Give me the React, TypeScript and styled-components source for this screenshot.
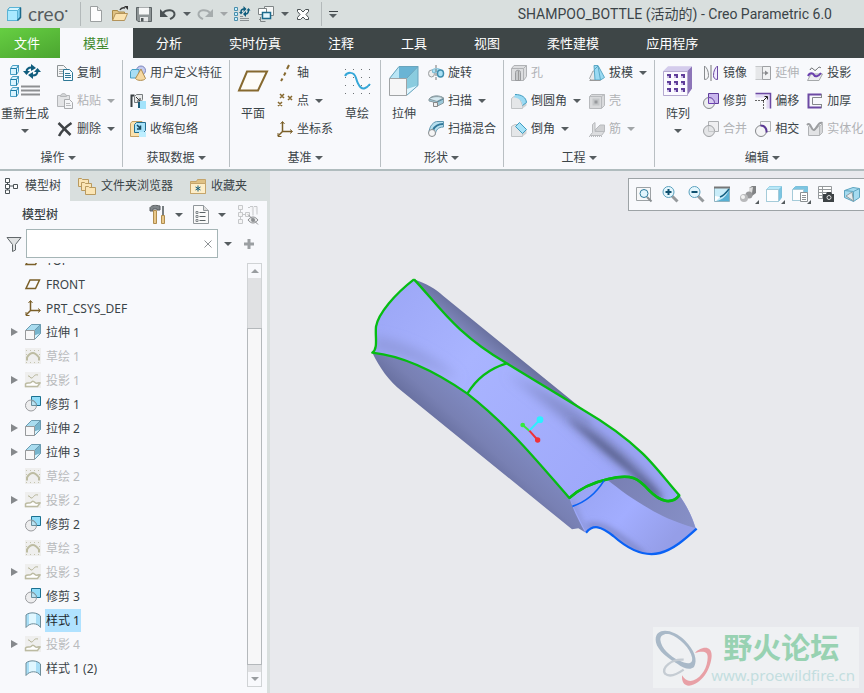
import React from 'react';
import styled, { createGlobalStyle, css } from 'styled-components';

const c = {
  chrome: '#d9dfde',
  dark: '#3e4647',
  panel: '#f8f9fc',
  line: '#b0bcbe',
  text: '#3b4448',
  off: '#b0b2b5',
  view: '#e8e9ed',
};

const Global = createGlobalStyle`
  * { box-sizing: border-box; }
  html, body, #root { height: 100%; }
  body { margin: 0; overflow: hidden; font: 12px/16px "Noto Sans", "Noto Sans CJK SC", sans-serif; color: ${c.text}; }
  button, input { font: inherit; color: inherit; }
`;

/* ---------- icons ---------- */

const art: Record<string, React.ReactNode> = {
  logo: (
    <g stroke="#1b6a8c" strokeLinejoin="round">
      <path d="M1.5 4.5 3.5 1.5h11v9.500l-3 3.500h-10z" fill="#7fd0f0" />
      <path d="M1.500 4.500h10v10h-10z" fill="#a9e9ff" stroke="#5ab4d6" />
      <path d="M1.500 4.500 3.500 1.500h11l-3 3z" fill="#d6f5ff" stroke="#5ab4d6" />
      <path d="M14.500 1.500v10l-3 3" fill="none" strokeWidth="1.500" />
    </g>
  ),
  newFile: (
    <>
      <path d="M2.500.5h7l4 4v11h-11z" fill="#fdfdfd" stroke="#9b9fa0" />
      <path d="M9.500.5v4h4" fill="#e6e8e8" stroke="#9b9fa0" />
    </>
  ),
  open: (
    <>
      <path d="M.5 14.500v-10h5l1 1.500h6v2" fill="#dfc284" stroke="#a98a4a" />
      <path d="M3.500 7.500h12l-3 7h-12z" fill="#fbe3b0" stroke="#b3935a" />
      <path d="M8 4c1-2 3-2.500 5-2" fill="none" stroke="#333" strokeWidth="1.500" />
      <path d="M12 0h4v4z" fill="#333" />
    </>
  ),
  save: (
    <>
      <path d="M.5 1.500h15v14H2l-1.500-1.500z" fill="#8e9596" stroke="#5d6466" />
      <path d="M3 1.500h10v7H3z" fill="#f6f7f7" />
      <path d="M4 11h8v4.500H4z" fill="#e5e7e7" />
      <path d="M5 12h2.500v3.500H5z" fill="#4d5456" />
    </>
  ),
  undo: (
    <>
      <path d="M3 7c3-4 12-4 11.500 1.500C14.300 11.500 12 12 10 13" fill="none" stroke="#4a5153" strokeWidth="2" />
      <path d="M0 3v8h8z" fill="#4a5153" />
    </>
  ),
  redo: (
    <>
      <path d="M13 7C10 3 1 3 1.500 8.500 1.700 11.500 4 12 6 13" fill="none" stroke="#a6acad" strokeWidth="2" />
      <path d="M16 3v8H8z" fill="#a6acad" />
    </>
  ),
  regenSmall: (
    <>
      <g fill="#c9efff" stroke="#4a8fac"><path d="M.5 1.500h3v3h-3zM.5 6.500h3v3h-3zM.5 11.500h3v3h-3z" /></g>
      <path d="M6 12.500h9M6 14.500h9M6 10.500h3" stroke="#8a9092" />
      <path d="M7 6c0-2 1-3 3-3M14.500 4c0 3-1 4-3 4" fill="none" stroke="#0f5c7d" strokeWidth="1.500" />
      <path d="M9.500 0l3 3-3 3zM12 5v6L9 8zM5 6h4l-2 2.500zM12.500 4.500h4L14.500 2z" fill="#0f5c7d" />
    </>
  ),
  windows: (
    <>
      <path d="M6.500.5h9v9h-9z" fill="#f5f6f6" stroke="#7f8586" />
      <path d="M.5 2.500h8v6h-8z" fill="#fff" stroke="#7f8586" />
      <path d="M4.500 6.500h8v6h-8z" fill="#e2f5fc" stroke="#1b6a8c" strokeWidth="1.500" />
      <path d="M1 13.500h2M2.500 11v4.500h5" fill="none" stroke="#7f8586" />
    </>
  ),
  closeWin: (
    <path d="M2.500 3.500h3L8 6l2.500-2.500h3v2L11 8.500l2.500 3v2h-3L8 11l-2.500 2.500h-3v-2L5 8.500l-2.500-3z" fill="#fff" stroke="#4a5153" />
  ),
  regen: (
    <>
      <g stroke="#4a9fc4" fill="#d9f4ff">
        <path d="M1.500 4.500l2-3h6v6l-2 3h-6zM1.500 15.500l2-3h6v6l-2 3h-6zM1.500 26.500l2-3h6v6l-2 3h-6z" />
        <path d="M1.500 4.500h6v6M7.500 4.500l2-3M1.500 15.500h6v6M7.500 15.500l2-3M1.500 26.500h6v6M7.500 26.500l2-3" fill="none" stroke="#1b7ba5" />
      </g>
      <path d="M12 22.500h19M12 26.500h19M12 30.500h19" stroke="#8d8f92" strokeWidth="2" />
      <path d="M17.500 8c0-3 2-4.500 5-4.500M28.500 7c0 3-2 4.500-5 4.500" fill="none" stroke="#0f5c7d" strokeWidth="2" />
      <path d="M22 0l5 4-5 3zM24 8v7l-5-4zM14 7h7l-3.500 4zM25 8h7l-3.500-4z" fill="#0f5c7d" />
    </>
  ),
  copy: (
    <>
      <path d="M.5.5h6l3 3v8h-9z" fill="#f4f5f6" stroke="#8d9294" />
      <path d="M2 4.500h5M2 6.500h5M2 8.500h5" stroke="#a5aaac" />
      <path d="M6.500 4.500h6l3 3v8h-9z" fill="#f4fbff" stroke="#2e7896" />
      <path d="M8 8.500h5M8 10.500h6M8 12.500h6" stroke="#2e7896" />
    </>
  ),
  paste: (
    <>
      <path d="M.5 2.500h12v11H.5z" fill="#e3e4e6" stroke="#b4b6b9" />
      <path d="M3.500 3.500c0-4 6-4 6 0z" fill="#d2d4d6" stroke="#b4b6b9" />
      <path d="M7.500 6.500h5l3 3v6h-8z" fill="#f5f6f8" stroke="#a9abae" />
      <path d="M9 10.500h4M9 12.500h5" stroke="#b9bbbe" />
    </>
  ),
  remove: <path d="M1.500 2 13.500 14M14.500 2C10 5 5 9 2 15" fill="none" stroke="#3f4346" strokeWidth="2.500" />,
  udf: (
    <>
      <circle cx="11" cy="5.500" r="4.500" fill="#c4cbee" stroke="#7b84bd" />
      <path d="M.5 6.500 2 4.500h7v7L8 13H.5z" fill="#a8def5" stroke="#4a9fc4" />
      <path d="M11 4 5.500 13.500c1.500 2.500 8.500 2.500 10 0z" fill="#f6d9a2" stroke="#b08d4e" />
    </>
  ),
  copyGeom: (
    <>
      <path d="M1.500 14V2.500h3" fill="none" stroke="#394043" strokeWidth="2" />
      <path d="M4.500 3.500l2-2h6v5l-2 3h-6z" fill="#e9ebec" stroke="#777c7e" />
      <path d="M6 4l4 4M10 5v3H7" stroke="#333" fill="none" />
      <path d="M8 9h3v6H8z" fill="#1b5d7a" /><path d="M10 8h6v8h-6z" fill="#a3e3fb" />
    </>
  ),
  shrink: (
    <>
      <path d="M.5 2.500 2 .5h10v12L10 15.500H.5z" fill="#fbe2ae" stroke="#c3a063" />
      <path d="M4.500 3.500l2-2h9v8l-2 2h-9z" fill="#a8e3fa" stroke="#236d8e" />
      <path d="M7 4l3 3M10.500 4.500V8H7" stroke="#17495e" strokeWidth="1.500" fill="none" />
      <path d="M9 11h7v5H9z" fill="#bdeeff" />
    </>
  ),
  plane: <path d="M10 1.500h20L21 20.500H2z" fill="#fdfcf8" stroke="#86692f" strokeWidth="2" />,
  axis: <path d="M12 0 10 4M8.500 7.500l-1.500 3M5.500 13.500 4 16" stroke="#86692f" strokeWidth="2" />,
  points: <path d="M3 1l4 4M7 1 3 5M11 3l4 4M15 3l-4 4M1 9l4 4M5 9l-4 4" stroke="#86692f" strokeWidth="1.500" />,
  csys: (
    <>
      <path d="M5.500 1v9.500H15M5.500 10.500 1 15" fill="none" stroke="#7a5f28" strokeWidth="1.500" />
      <path d="M3.500 3l2-2.500 2 2.500M13 8.500l2.500 2-2.500 2M1 12v3.500h3.500" fill="none" stroke="#7a5f28" />
    </>
  ),
  sketch: (
    <>
      <g fill="#6d7275">
        {[0, 8, 16, 24].map((y) => [0, 8, 16, 24].map((x) => <rect key={`${x}-${y}`} x={x + 2} y={y + 1} width="1" height="1" />))}
      </g>
      <path d="M2 8C4 4 11 3 13 10S19 26 27 16" fill="none" stroke="#35a7d8" strokeWidth="2" />
    </>
  ),
  extrudeBig: (
    <>
      <path d="M11 1.500h19v19L18.500 30.500H1.500v-17z" fill="#8fc8df" />
      <path d="M11 1.500 1.500 13.500h17L30 1.500z" fill="#b9e5f5" /><path d="M11 1.500v12h7.500L30 1.500z" fill="#6ab4d4" />
      <path d="M30 1.500 18.500 13.500v17L30 20.500z" fill="#8accdf" /><path d="M18.500 30.500V24l11.500-3.500z" fill="#dff6ff" />
      <path d="M11 1.500h19v19L18.500 30.500M30 1.500 18.500 13.500M11 1.500 1.500 13.500" fill="none" stroke="#6aa5bd" />
      <path d="M1.500 13.500h17v17h-17z" fill="#f6f6f7" stroke="#a0a3a5" />
    </>
  ),
  extrude: (
    <>
      <path d="M6.500.5h9v9l-6 6h-9v-9z" fill="#7dbdd8" />
      <path d="M6.500.5 1 6h8.500l6-5.500z" fill="#a9dcef" /><path d="M15.500.5l-6 6v9l6-6z" fill="#77b5cd" />
      <path d="M9.500 15.500v-4l5-2z" fill="#ddf6ff" />
      <path d="M6.500.5h9v9l-6 6M15.500.5l-6 6M6.500.5l-6 6" fill="none" stroke="#6b9bb0" />
      <path d="M.5 6.500h9v9h-9z" fill="#f7f7f8" stroke="#96999b" />
    </>
  ),
  revolve: (
    <>
      <ellipse cx="3.500" cy="8.500" rx="3" ry="3.500" fill="#eee" stroke="#999ea0" />
      <path d="M4 5c3-2 6-2 9 0l-1 3c-2-1-5-1-7 0z" fill="#a9e0f5" stroke="#7bb9d0" />
      <ellipse cx="12.500" cy="8.500" rx="3" ry="3.500" fill="#a9e0f5" stroke="#3f8eae" strokeWidth="1.500" />
      <path d="M8 0v16" stroke="#777" strokeDasharray="3 1" />
    </>
  ),
  sweep: (
    <>
      <path d="M1 6C4 2 12 2 15.500 5v5l-6 3-4-1V9L1 8z" fill="#9bc8d9" stroke="#8b9ba1" />
      <path d="M1 6c3-3 11-3 14.500-1L9 8.500z" fill="#d5e9f0" stroke="#8b9ba1" /><path d="M9 9l6.500-3" stroke="#56869b" />
      <path d="M5.500 9.500h4v4h-4z" fill="#efefef" stroke="#888" />
    </>
  ),
  sweepBlend: (
    <>
      <path d="M1 12C1 5 6 0 10 .5h5.500V6C10 6 8 9 7 14z" fill="#b7dfee" stroke="#5f97b0" />
      <path d="M5 9C7 5 10 3 15 3" fill="none" stroke="#31789a" strokeWidth="2" />
      <circle cx="4" cy="12" r="3.500" fill="#f5f5f5" stroke="#8a8d8f" />
    </>
  ),
  hole: (
    <g fill="#dcdddf" stroke="#b0b2b5">
      <path d="M.5 3.500 3 .5h12.500v11l-3 4H.5z" /><path d="M12.500 3.500l3-3M.5 3.500h12v12" />
      <path d="M4.500 15.500v-8c0-3 5-3 5 0v8z" fill="#c6c8ca" stroke="#999b9e" /><path d="M7.500 6v9.500" stroke="#999" />
    </g>
  ),
  round: (
    <>
      <path d="M.5 5.500 3 3.500h5l3.500 9V15.500H.5z" fill="#e4e6e8" stroke="#c0c3c5" />
      <path d="M11.500 12.500l4-3v3l-4 3z" fill="#cfd2d4" />
      <path d="M4 1.500c7 0 11 3 11.500 8l-4 3C11.500 8 8 5 3 4.500z" fill="#9bdaf3" />
      <path d="M4 1.500c7 0 11 3 11.500 8l-4 3" fill="none" stroke="#3f9cc0" />
    </>
  ),
  chamfer: (
    <>
      <path d="M.5 5.500 4 3.500h3l4.500 9v3H.5z" fill="#e4e6e8" stroke="#c0c3c5" />
      <path d="M11.500 12.500l4-4v4l-4 3z" fill="#cfd2d4" />
      <path d="M8.500 1.500l7 7-4 4-7-7z" fill="#a8e3f8" stroke="#3f9cc0" />
    </>
  ),
  draft: (
    <>
      <path d="M.5 13.500 4 6h5v9H2z" fill="#e8eaec" stroke="#a5a8aa" />
      <path d="M5 .5h4l6.500 12-4 2.500H6z" fill="#9adaf3" stroke="#5ba8c6" />
      <path d="M5 5l4-4 2.500 14" fill="none" stroke="#5ba8c6" /><path d="M.5 15.500h11" stroke="#999" />
    </>
  ),
  shell: (
    <g stroke="#b8babd" fill="#d9dadc">
      <path d="M.5 3.500l2-2h13v11l-3 3H.5z" /><path d="M12.500 3.500l3-2M.5 3.500h12v12" />
      <path d="M4.500 6.500h5v5h-5z" fill="#97999c" stroke="#c4c6c8" strokeWidth="2" />
    </g>
  ),
  rib: (
    <g stroke="#b8babd" fill="#dcdddf">
      <path d="M3.500 3.500 6 1.500v9h9.500l-3 4H1l2.500-3z" /><path d="M6 9l5-5h4.500v6.500H8z" fill="#cfd0d2" />
      <path d="M0 15.500h14" strokeDasharray="1 1" />
    </g>
  ),
  pattern: (
    <>
      <path d="M1 6.500l5-5h24v22l-5 7H1z" fill="#cfc5e8" />
      <path d="M1 6.500l5-5h24l-5 5z" fill="#d4ccec" /><path d="M25 6.500l5-5v22l-5 7z" fill="#8d75b8" />
      <path d="M1.500 6.500h24v24h-24z" fill="#fbfaff" stroke="#b5a9d0" />
      <g fill="#5f3d9a">
        {[9, 16, 23].map((y) => [5, 12, 19].map((x) => <rect key={`${x}-${y}`} x={x} y={y} width="4" height="4" />))}
      </g>
      <g fill="#cdbfe6">
        {[11, 18, 25].map((y) => [5, 12, 19].map((x) => <rect key={`${x}-${y}`} x={x} y={y} width="2" height="2" />))}
      </g>
    </>
  ),
  mirror: (
    <>
      <path d="M1.500 1v13.500c3 0 4-2 4-4C5.500 6 4 3 1.500 1z" fill="#f6f6f8" stroke="#898c8f" />
      <path d="M14.500 1v13.500c-3 0-4-2-4-4 0-4.500 1.500-7.500 4-9.500z" fill="#f0eaff" stroke="#6c4aa3" />
      <path d="M8 0v16" stroke="#777" />
    </>
  ),
  extend: (
    <>
      <path d="M.5 1.500h7v13h-7" fill="#e6e7e9" stroke="#c6c8ca" /><path d="M7.500 1.500h8v13h-8z" fill="#f1f2f3" stroke="#9fa1a4" />
      <path d="M7 8h5" stroke="#88898c" /><path d="M10 5.500l3.500 2.500-3.500 2.500z" fill="#88898c" />
    </>
  ),
  project: (
    <>
      <path d="M3 5c2-5 4 2 6 0s3-4 5-2" fill="none" stroke="#5c5f62" />
      <path d="M.5 15.500 4 9h11.500L12 15.500z" fill="#ececef" stroke="#a5a8aa" />
      <path d="M1 11c2-4 5-3 6-1s4 2 7-2" fill="none" stroke="#6a3fae" strokeWidth="2" />
    </>
  ),
  trim: (
    <>
      <path d="M5.500.5h10v10h-10z" fill="#c9b6ee" stroke="#5f3d9a" />
      <circle cx="6" cy="10" r="5.500" fill="#edeef0" stroke="#85888b" />
      <path d="M5.500 10.500V4.500c4 0 6 3 6 6z" fill="#d8cdf0" stroke="#6c3fb3" />
    </>
  ),
  offset: (
    <>
      <path d="M.5.5h15v15h-4v-11h-11z" fill="#e2daf3" />
      <path d="M.5.5h15v15" fill="none" stroke="#6c4aa3" strokeWidth="1.500" /><path d="M0 7.500h8.500V16" fill="none" stroke="#666" strokeDasharray="2 1" />
      <path d="M8 8l4-4M9.500 3.500h3v3" fill="none" stroke="#222" />
    </>
  ),
  thicken: (
    <>
      <path d="M14.500 1.500h-13v13h13" fill="none" stroke="#6c4aa3" strokeWidth="2" />
      <path d="M15 4.500H5.500v7H15" fill="none" stroke="#85888b" /><path d="M14.500 1v3.500M14.500 11.500V15" stroke="#85888b" />
    </>
  ),
  merge: (
    <>
      <path d="M5.500.5h10v10h-10z" fill="#efeff1" stroke="#aeb0b3" />
      <circle cx="6" cy="10" r="5.500" fill="#e4e5e7" stroke="#9fa1a4" />
      <path d="M5.500 5v5.500h6" fill="none" stroke="#c6c8ca" />
    </>
  ),
  intersect: (
    <>
      <path d="M5.500.5h10v10h-10z" fill="#f6f6f8" stroke="#b0b2b5" />
      <circle cx="6" cy="10" r="5.500" fill="#f4f4f6" stroke="#85888b" />
      <path d="M5.500 4.500c4 0 6.500 3 6 7" fill="none" stroke="#5a3795" strokeWidth="2" />
    </>
  ),
  solidify: (
    <>
      <path d="M1.500 5.500c3-2 4 4 6 3.500s3-3 5-4.500v10h-11z" fill="#e2e3e5" stroke="#b0b2b5" />
      <path d="M0 4c4-4 4 6 7 5s4-9 8.500-7" fill="none" stroke="#9c9ea1" strokeWidth="2" />
      <path d="M12.500 5.500l3-3v9l-3 3z" fill="#d5d6d8" stroke="#b5b7b9" />
    </>
  ),
  treeTab: (
    <>
      <path d="M3.500 4v2M3.500 9v3M6 8h5" stroke="#4b5356" fill="none" />
      <path d="M1.500.5h4v4h-4zM1.500 6.500h4v4h-4zM1.500 12h4v3.500h-4zM9.500 6.500h4v4h-4z" fill="#fff" stroke="#4b5356" />
    </>
  ),
  folders: (
    <g fill="#fbe5b5" stroke="#b99a5f">
      <path d="M.5 1.500h3l1 1h6v7H.5z" /><path d="M3.500 5.500h3l1 1h6v7h-10z" /><path d="M7.500 9.500h3l1 1h6v7h-10z" />
    </g>
  ),
  favorites: (
    <>
      <path d="M.5 3.500h6l1-2h8v14H.5z" fill="#dfc184" stroke="#c5a56b" /><path d="M.5 5.500h15v10H.5z" fill="#fdeec9" stroke="#c5a56b" />
      <path d="M8 7.500v6M5.500 9l5 3M10.500 9l-5 3" stroke="#155e7d" />
    </>
  ),
  tools: (
    <>
      <path d="M1 2.500C3 0 7 0 11 1v4H8V4H4v2H1z" fill="#80868a" stroke="#5a5f62" />
      <path d="M4.500 5.500h3v13h-3z" fill="#e9c88b" stroke="#b08d4e" /><path d="M14 1v9" stroke="#777d80" strokeWidth="2" />
      <path d="M12.500 10.500h3v8h-3z" fill="#e9c88b" stroke="#b08d4e" />
    </>
  ),
  settings: (
    <>
      <path d="M1.500.5h10l5 5v13h-15z" fill="#fafafa" stroke="#90969a" /><path d="M11.500.5v5h5" fill="#ddd" stroke="#90969a" />
      <path d="M7.500 7.500h6M7.500 11.500h6M7.500 15.500h6" stroke="#5b6366" />
      <path d="M4 6.500h2v2H4zM4 10.500h2v2H4zM4 14.500h2v2H4z" fill="#fff" stroke="#80868a" />
    </>
  ),
  hideTree: (
    <>
      <g fill="#f4f4f5" stroke="#c6c8ca">
        <path d="M2.500 4v12M5 9.500h3M10 2.500h2M16 1.500h3v8" /><path d="M.5.5h4v4h-4zM.5 7.500h4v4h-4zM.5 14.500h4v4h-4zM7.500 7.500h4v4h-4zM12 1.500h3v9" />
      </g>
      <path d="M10 15c3-4 7-4 10 0-3 4-7 4-10 0z" fill="#e6e7e8" stroke="#8c8e91" /><circle cx="15" cy="15" r="2" fill="#8c8e91" />
      <path d="M10 9.500l10 10" stroke="#8c8e91" />
    </>
  ),
  filter: <path d="M1 1.500h14L9.500 8.500V14L6.500 15.500v-7z" fill="#e0e2e3" stroke="#62686b" />,
  plus: <path d="M6 1v10M1 6h10" stroke="#9b9fa2" strokeWidth="3" />,
  cross: <path d="M2.500 2.500l7 7M9.500 2.500l-7 7" stroke="#8f9396" />,
  planeSmall: <path d="M5 4h9.500L10.500 12.500H1z" fill="none" stroke="#7a5f28" strokeWidth="1.500" />,
  sketchOff: (
    <>
      <path d="M0 0h16v16H0z" fill="#efefee" />
      <path d="M1 2.500h15M1 14.500h15" stroke="#c5c4b0" strokeDasharray="1 3" />
      <path d="M1 6.500h1M14 6.500h1" stroke="#c5c4b0" />
      <path d="M2 12.500V9.500C4 6 6 5 8 5s4 2 6 4.500v3" fill="none" stroke="#bdbca2" strokeWidth="2" />
    </>
  ),
  projectOff: (
    <>
      <path d="M0 0h16v16H0z" fill="#efefee" />
      <path d="M3 4c2-1 2 3 4 2s2-4 6-3" fill="none" stroke="#b5b498" />
      <path d="M.5 14.500V12c2-2 4 0 5.500-1.500s2-2 4 0 3-.5 5 .5l-2.500 3.500z" fill="#fff" stroke="#bcbba2" strokeWidth="1.500" />
    </>
  ),
  trimTree: (
    <>
      <path d="M6.500.5h9v9h-9z" fill="#8fdcf8" stroke="#1b7191" />
      <circle cx="6" cy="9.500" r="5.500" fill="#ededee" stroke="#9a9c9f" />
      <path d="M6.500 9.500V4.500c3 .5 5 2.500 5 5z" fill="#b9e2f1" stroke="#6b8f9c" />
    </>
  ),
  style: (
    <>
      <path d="M1 15.500V3c3-3 11-3 14.500 1v11.500c-3-5-11-5-14.500 0z" fill="#a8def6" />
      <path d="M4 1.500c3-1 5-.5 7 0v11c-2-1-5-1-7 0z" fill="#e0f7ff" />
      <path d="M1 15.500V3c3-3 11-3 14.500 1v11.500c-3-5-11-5-14.500 0z" fill="none" stroke="#6f8d99" />
    </>
  ),
  zoomFit: (
    <>
      <path d="M.5 1.500h14v13H.5z" fill="#f7f8f9" stroke="#9da2a5" /><path d="M11 11l4.500 4.500" stroke="#8a8f92" strokeWidth="2" />
      <circle cx="8" cy="7.500" r="4" fill="#e1f5fd" stroke="#2f7b9c" />
    </>
  ),
  zoomIn: (
    <>
      <path d="M10 10l5.500 5.500" stroke="#95999c" strokeWidth="3" /><circle cx="6.500" cy="6" r="5.500" fill="#e4f6fd" stroke="#5ba1be" />
      <path d="M6.500 3v6M3.500 6h6" stroke="#0f5170" strokeWidth="2" />
    </>
  ),
  zoomOut: (
    <>
      <path d="M10 10l5.500 5.500" stroke="#95999c" strokeWidth="3" /><circle cx="6.500" cy="6" r="5.500" fill="#e4f6fd" stroke="#5ba1be" />
      <path d="M3.500 6h6" stroke="#0f5170" strokeWidth="2" />
    </>
  ),
  repaint: (
    <>
      <path d="M.5 1.500h15v14H.5z" fill="#c9edf9" stroke="#8fb3c0" /><path d="M15 4v11H2C9 14 13 9 15 4z" fill="#58b0d3" />
      <path d="M0 1.500h16" stroke="#777" strokeWidth="2" /><path d="M6 11C9 10 12 7 15 3" fill="none" stroke="#176283" strokeWidth="1.500" />
      <path d="M1 10c2 0 3 1 5 1l-4 4H1z" fill="#fff" />
    </>
  ),
  shading: (
    <>
      <path d="M9 2l3-2h4v7l-4 3-3-2z" fill="#808284" />
      <path d="M9 2l4-1-1 6-3 1z" fill="#dedede" /><circle cx="9" cy="9" r="3.500" fill="#98999b" />
      <circle cx="4" cy="12" r="4" fill="#b9babc" /><circle cx="3" cy="11" r="2" fill="#f2f2f2" />
    </>
  ),
  display: (
    <>
      <path d="M.5 3.500l3-3h12v11l-3 4H.5z" fill="#7cc5e2" stroke="#7cc0da" />
      <path d="M.5 3.500l3-3h12l-3 3z" fill="#b9e8f8" /><path d="M.5 3.500h12v12H.5z" fill="#fdfeff" stroke="#a5cbd9" />
    </>
  ),
  views: (
    <>
      <path d="M.5 3.500l3-3h12v10l-3 4H.5z" fill="#7cc5e2" stroke="#7cc0da" />
      <path d="M.5 3.500h11v11H.5z" fill="#fdfeff" stroke="#a5cbd9" /><path d="M8.500 6.500h7v9h-7z" fill="#fff" stroke="#8c9194" />
      <path d="M10 9.500h4M10 11.500h4M10 13.500h4" stroke="#8c9194" />
    </>
  ),
  viewMgr: (
    <>
      <path d="M.5.5h13v12H.5zM.5 3.500h13M.5 6.500h13M.5 9.500h13M4.500.5v12" fill="#fff" stroke="#95999c" />
      <path d="M5 8h3l1-2h4l1 2h2v8H5z" fill="#3d4245" /><circle cx="11" cy="11.500" r="2" fill="#3d4245" stroke="#ddd" />
    </>
  ),
  perspective: (
    <g stroke="#5fa5c0" fill="#a5dbf0">
      <path d="M.5 4.500 9 1.500l6.500 1v9l-6 4-9-4z" /><path d="M.5 4.500l9 1v10M9.500 5.500l6-3" fill="none" />
      <path d="M2 10l6-4 1.500 9z" fill="#e8eced" stroke="#8f9ea4" />
    </g>
  ),
};

const IconSvg = styled.svg`
  display: block;
  flex: none;
  overflow: visible;
`;

function Icon({ name, w = 16, h = w }: { name: string; w?: number; h?: number }) {
  return (
    <IconSvg width={w} height={h} viewBox={`0 0 ${w} ${h}`} fill="none" aria-hidden="true">
      {art[name]}
    </IconSvg>
  );
}

const Caret = styled.span<{ $off?: boolean }>`
  flex: none;
  width: 0;
  border: 4px solid transparent;
  border-top-color: ${(p) => (p.$off ? '#a2a6a8' : '#565d60')};
  border-bottom: 0;
`;

const FlatButton = styled.button`
  display: flex;
  align-items: center;
  justify-content: center;
  padding: 0;
  border: 0;
  background: none;
  white-space: nowrap;
`;

/* ---------- frame ---------- */

const Window = styled.div`
  display: flex;
  flex-direction: column;
  height: 100vh;
  background: ${c.view};
`;

const TitleBar = styled.header`
  display: flex;
  align-items: center;
  height: 28px;
  flex: none;
  padding: 0 32px 0 6px;
  background: ${c.chrome};
`;
const Brand = styled.span`
  width: 46px;
  margin-left: 6px;
  font: 19px/22px Lato, sans-serif;
  color: #565c5e;
  white-space: nowrap;
  sup { font-size: 6px; line-height: 6px; vertical-align: 8px; }
`;
const Rule = styled.span`
  width: 1px;
  height: 24px;
  margin: 0 3px 0 6px;
  background: #b3b9ba;
`;
const QuickButton = styled(FlatButton)`
  width: 24px;
  height: 24px;
`;
const QuickMenu = styled(FlatButton)`
  width: 13px;
  height: 24px;
`;
const MoreMenu = styled(FlatButton)`
  flex-direction: column;
  gap: 2px;
  width: 16px;
  height: 24px;
  &::before { content: ''; width: 9px; height: 1px; background: #3d4346; }
`;
const Title = styled.h1`
  margin: 0 0 0 auto;
  font: 400 14px/20px Roboto, "Noto Sans CJK SC", sans-serif;
  white-space: nowrap;
`;

const TabBar = styled.nav`
  display: flex;
  height: 30px;
  flex: none;
  background: ${c.dark};
`;
const Tab = styled.button<{ $kind?: 'file' | 'active' }>`
  padding: 0 24px 0 23px;
  border: 0;
  background: none;
  color: #fff;
  font-size: 13px;
  line-height: 20px;
  white-space: nowrap;
  ${(p) => p.$kind === 'file' && css`
    padding: 0 20px 0 14px;
    background: linear-gradient(160deg, #66cf42, #4ba530);
  `}
  ${(p) => p.$kind === 'active' && css`
    background: ${c.panel};
    color: #3f8a2d;
  `}
`;

/* ---------- ribbon ---------- */

const Ribbon = styled.section`
  display: flex;
  flex: none;
  height: 113px;
  overflow: hidden;
  background: ${c.panel};
  border-bottom: 2px solid ${c.line};
`;
const Group = styled.div`
  display: flex;
  flex-direction: column;
  flex: none;
  position: relative;
  padding: 0 6px;
  & + &::before {
    content: '';
    position: absolute;
    left: -1px;
    top: 2px;
    bottom: 2px;
    width: 1px;
    background: #b9bfc3;
  }
`;
const GroupBody = styled.div`
  display: flex;
  height: 86px;
  padding-top: 1px;
  gap: 8px;
`;
const GroupName = styled(FlatButton)`
  gap: 3px;
  height: 25px;
  padding-top: 3px;
`;
const Column = styled.div`
  display: grid;
  grid-template-rows: repeat(3, 28px);
  justify-items: start;
`;
const Command = styled(FlatButton)`
  gap: 4px;
  &:disabled { color: ${c.off}; }
  ${Caret} { margin-left: 2px; }
`;
const BigCommand = styled(FlatButton)`
  flex-direction: column;
  justify-content: flex-start;
  min-width: 34px;
  ${Caret} { margin-top: 7px; }
`;
const BigArt = styled.span`
  display: grid;
  place-items: center;
  height: 43px;
  margin-bottom: 4px;
`;

type Cmd = [icon: string, label: string, opts?: string];

function Commands({ items }: { items: Cmd[] }) {
  return (
    <Column>
      {items.map(([icon, label, o = '']) => (
        <Command key={label} disabled={o.includes('x')}>
          <Icon name={icon} />
          {label}
          {o.includes('v') && <Caret $off={o.includes('x')} />}
        </Command>
      ))}
    </Column>
  );
}
function Big({ icon, label, w = 32, h = 32, menu }: { icon: string; label: string; w?: number; h?: number; menu?: boolean }) {
  return (
    <BigCommand>
      <BigArt><Icon name={icon} w={w} h={h} /></BigArt>
      {label}
      {menu && <Caret />}
    </BigCommand>
  );
}
function RibbonGroup({ name, children, className }: { name: string; children: React.ReactNode; className?: string }) {
  return (
    <Group className={className}>
      <GroupBody>{children}</GroupBody>
      <GroupName>{name}<Caret /></GroupName>
    </Group>
  );
}
const OperateGroup = styled(RibbonGroup)`
  padding: 0 8px 0 1px;
`;
const DataGroup = styled(RibbonGroup)`
  padding: 0 8px 0 7px;
`;
const DatumGroup = styled(RibbonGroup)`
  padding: 0 7px 0 6px;
  ${GroupBody} { gap: 7px; }
`;
const ShapeGroup = styled(RibbonGroup)`
  padding: 0 8px 0 6px;
  ${GroupBody} { gap: 7px; }
`;
const EngineerGroup = styled(RibbonGroup)`
  padding: 0 8px 0 7px;
`;

/* ---------- model tree ---------- */

const Main = styled.main`
  display: flex;
  flex: 1;
  min-height: 0;
`;
const Side = styled.aside`
  display: flex;
  flex-direction: column;
  width: 270px;
  flex: none;
  background: ${c.panel};
  border-right: 3px solid ${c.chrome};
`;
const SideTabs = styled.div`
  display: flex;
  height: 30px;
  flex: none;
  background: ${c.chrome};
`;
const SideTab = styled(FlatButton)<{ $active?: boolean }>`
  gap: 5px;
  padding: 0 9px 0 8px;
  ${(p) => p.$active && css`
    padding-left: 4px;
    background: ${c.panel};
  `}
`;
const SideHeader = styled.div`
  display: flex;
  align-items: center;
  gap: 9px;
  height: 28px;
  flex: none;
  padding: 0 9px 0 22px;
`;
const SideTitle = styled.h2`
  margin: 0 auto 0 0;
  font-size: 12px;
  line-height: 16px;
  font-weight: 500;
`;
const ToolPair = styled(FlatButton)`
  gap: 8px;
`;
const TreeButton = styled(FlatButton)`
  margin-left: 3px;
`;
const SearchRow = styled.form`
  display: flex;
  align-items: center;
  gap: 4px;
  flex: none;
  margin: 0;
  padding: 0 12px 0 6px;
`;
const SearchBox = styled.div`
  display: flex;
  flex: 1;
  min-width: 0;
  height: 29px;
  padding-right: 3px;
  border: 1px solid #a5b5b6;
  background: #fff;
  input { flex: 1; min-width: 0; border: 0; padding: 0 6px; outline: 0; background: none; }
`;
const SearchMenu = styled(FlatButton)`
  width: 12px;
  height: 24px;
  margin-right: 5px;
`;
const TreeArea = styled.div`
  display: flex;
  flex: 1;
  min-height: 0;
  margin: 5px 5px 6px 0;
  overflow: hidden;
`;
const Tree = styled.ul`
  flex: 1;
  margin: -15px 0 0;
  padding: 0;
  list-style: none;
`;
const Node = styled.li<{ $off?: boolean }>`
  display: flex;
  align-items: center;
  height: 24px;
  padding-left: 11px;
  color: ${(p) => (p.$off ? '#b9bbbd' : c.text)};
`;
const Expander = styled.button<{ $shown: boolean }>`
  width: 14px;
  height: 16px;
  padding: 0;
  border: 0;
  background: none;
  visibility: ${(p) => (p.$shown ? 'visible' : 'hidden')};
  &::before {
    content: '';
    display: block;
    width: 0;
    border: 4px solid transparent;
    border-left: 7px solid #86898c;
    border-right: 0;
  }
`;
const NodeName = styled.span<{ $selected?: boolean }>`
  margin-left: 4px;
  padding: 3px 1px;
  line-height: 17px;
  white-space: nowrap;
  ${(p) => p.$selected && css`background: #b0e2ff; color: #20282c;`}
`;
const ScrollBar = styled.div`
  display: flex;
  flex-direction: column;
  width: 15px;
  background: #e0e1e3;
  border: 1px solid #d0d3d5;
`;
const ScrollArrow = styled(FlatButton)<{ $up?: boolean }>`
  height: 14px;
  background: ${c.panel};
  ${Caret} { transform: ${(p) => (p.$up ? 'rotate(180deg)' : 'none')}; border-top-color: #999da0; }
`;
const Thumb = styled.div`
  flex: 1;
  margin: 50px -1px 7px;
  background: #f7f7f8;
  border: 1px solid #b4b8bb;
`;

type TreeItem = [icon: string, name: string, opts?: string];
const nodes: TreeItem[] = [
  ['planeSmall', 'TOP'],
  ['planeSmall', 'FRONT'],
  ['csys', 'PRT_CSYS_DEF'],
  ['extrude', '拉伸 1', '>'],
  ['sketchOff', '草绘 1', 'x'],
  ['projectOff', '投影 1', '>x'],
  ['trimTree', '修剪 1'],
  ['extrude', '拉伸 2', '>'],
  ['extrude', '拉伸 3', '>'],
  ['sketchOff', '草绘 2', 'x'],
  ['projectOff', '投影 2', '>x'],
  ['trimTree', '修剪 2'],
  ['sketchOff', '草绘 3', 'x'],
  ['projectOff', '投影 3', '>x'],
  ['trimTree', '修剪 3'],
  ['style', '样式 1', 's'],
  ['projectOff', '投影 4', '>x'],
  ['style', '样式 1 (2)'],
];

/* ---------- viewport ---------- */

const Viewport = styled.section`
  position: relative;
  flex: 1;
  min-width: 0;
  overflow: hidden;
`;
const ViewTools = styled.div`
  position: absolute;
  top: 7px;
  right: -3px;
  display: flex;
  align-items: center;
  gap: 10px;
  height: 33px;
  padding: 0 6px 2px 7px;
  background: ${c.panel};
  border: 1px solid #9da3a6;
`;
const ViewButton = styled(FlatButton)<{ $menu?: boolean }>`
  position: relative;
  ${(p) => p.$menu && css`
    &::after {
      content: '';
      position: absolute;
      right: -3px;
      bottom: -2px;
      border: 2px solid #555b5e;
      border-top-color: transparent;
      border-left-color: transparent;
    }
  `}
`;
const ModelCanvas = styled.svg`
  position: absolute;
  left: 90px;
  top: 99px;
`;
const Watermark = styled.div`
  position: absolute;
  right: 5px;
  bottom: 5px;
  display: flex;
  padding: 0 4px 0 0;
  background: #eff1f3;
`;
const MarkText = styled.div`
  display: flex;
  flex-direction: column;
  align-items: flex-start;
`;
const MarkName = styled.strong`
  margin-left: 12px;
  font: 700 29px/38px "Noto Sans CJK SC", sans-serif;
  color: #98d2b2;
`;
const MarkUrl = styled.span`
  font: 15px/20px "Noto Sans", sans-serif;
  color: #c3dedf;
`;

const upper = 'M162 28C235 105 285 190 440 280C505 320 590 370 670 420C730 455 795 500 845 548C885 585 925 640 958 676';
const lower = 'C545 590 450 470 322 371C220 300 130 258 37 248';
const edgeLeft = 'C55 235 45 200 48 170C55 130 105 72 162 28';
const rim = 'C935 705 900 695 868 662C835 625 815 610 745 627C700 637 660 655 628 684';
const tail = 'M678 788C700 762 722 768 760 798C805 838 850 862 900 849C940 838 975 808 1010 776';

function Model() {
  return (
    <ModelCanvas width="350" height="300" viewBox="0 0 1050 900" role="img" aria-label="SHAMPOO_BOTTLE">
      <defs>
        <linearGradient id="side" gradientUnits="userSpaceOnUse" x1="350" y1="400" x2="250" y2="510">
          <stop offset="0" stopColor="#7f89c0" /><stop offset=".5" stopColor="#7880b3" /><stop offset="1" stopColor="#626a98" />
        </linearGradient>
        <linearGradient id="back" gradientUnits="userSpaceOnUse" x1="340" y1="210" x2="390" y2="150">
          <stop offset="0" stopColor="#7d86ba" /><stop offset="1" stopColor="#5d648f" />
        </linearGradient>
        <linearGradient id="skin" gradientUnits="userSpaceOnUse" x1="80" y1="100" x2="760" y2="620">
          <stop offset="0" stopColor="#9da8f7" /><stop offset=".35" stopColor="#a9b4ff" /><stop offset="1" stopColor="#9ea8fa" />
        </linearGradient>
        <linearGradient id="inner" gradientUnits="userSpaceOnUse" x1="660" y1="650" x2="900" y2="850">
          <stop offset="0" stopColor="#9aa5f3" /><stop offset=".5" stopColor="#a2adff" /><stop offset="1" stopColor="#959ee8" />
        </linearGradient>
        <linearGradient id="shade" gradientUnits="userSpaceOnUse" x1="760" y1="640" x2="990" y2="760">
          <stop offset="0" stopColor="#7980b4" /><stop offset="1" stopColor="#868fc6" />
        </linearGradient>
        <clipPath id="skinClip"><path d={`${upper}${rim}${lower}${edgeLeft}Z`} /></clipPath>
        <clipPath id="tailClip"><path d="M628 684C660 655 700 637 745 627L958 676 1008 776C975 808 940 838 900 849C850 862 805 838 760 798C722 768 700 762 678 788Z" /></clipPath>
        <filter id="b10" filterUnits="userSpaceOnUse" x="0" y="0" width="1050" height="900"><feGaussianBlur stdDeviation="10" /></filter>
        <filter id="b20" filterUnits="userSpaceOnUse" x="0" y="0" width="1050" height="900"><feGaussianBlur stdDeviation="18" /></filter>
      </defs>
      <path d="M162 28C200 42 225 55 250 78L675 424 640 430 440 290 280 170Z" fill="url(#back)" />
      <path d={`M37 248C60 295 85 330 125 363L636 778 655 775 675 787 690 740 650 690 628 684${lower}Z`} fill="url(#side)" />
      <path d="M628 684C660 655 700 637 745 627C815 610 835 625 868 662C900 695 935 712 958 676C985 715 998 745 1008 776C975 808 940 838 900 849C850 862 805 838 760 798C722 768 700 762 675 787C655 750 640 720 628 684Z" fill="url(#inner)" />
      <g clipPath="url(#tailClip)" fill="none">
        <path d="M680 770C730 755 770 795 850 855" stroke="#7a83c2" strokeWidth="16" filter="url(#b10)" />
        <path d="M635 690C648 730 660 760 680 785" stroke="#8790d0" strokeWidth="12" filter="url(#b10)" />
      </g>
      <path d="M740 628C815 610 835 625 868 662C900 695 935 712 958 676C985 715 998 745 1006 774C940 755 900 735 868 716C820 690 780 660 740 628Z" fill="url(#shade)" />
      <path d={`${upper}${rim}${lower}${edgeLeft}Z`} fill="url(#skin)" />
      <g clipPath="url(#skinClip)">
        <path d="M40 200C120 210 210 250 300 330C210 290 110 245 40 240Z" fill="#8f99dc" filter="url(#b20)" />
        <path d="M440 310C560 365 660 420 740 490C810 550 880 610 920 680C880 690 860 670 830 625C780 590 700 530 640 470C570 410 500 350 440 310Z" fill="#8089c6" filter="url(#b20)" />
        <path d="M620 445C680 475 750 530 800 575C850 620 890 655 910 690C880 690 850 650 815 610C750 560 680 495 620 445Z" fill="#59618d" filter="url(#b10)" />
        <path d="M700 450C790 510 870 580 940 665" fill="none" stroke="#99a3f2" strokeWidth="22" filter="url(#b10)" />
      </g>
      <g fill="none" stroke="#06bd12" strokeWidth="7" strokeLinejoin="round">
        <path d={`${upper}${rim}${lower}${edgeLeft}`} />
        <path d="M322 371C350 325 390 295 440 280" />
        <path d="M628 684C660 655 700 637 745 627C815 610 835 625 868 662C900 695 935 705 958 676" strokeWidth="8" />
      </g>
      <g fill="none" stroke="#0a62f5" strokeWidth="7">
        <path d={tail} />
        <path d="M637 709C675 697 705 675 732 632" strokeWidth="5" />
      </g>
      <path d="M508 482 488 465" stroke="#35e83f" strokeWidth="6" /><circle cx="488" cy="465" r="7" fill="#35e83f" />
      <path d="M508 482 540 449" stroke="#2bf0ff" strokeWidth="6" /><circle cx="540" cy="449" r="10" fill="#2bf0ff" />
      <path d="M508 482 533 510" stroke="#f03037" strokeWidth="6" /><circle cx="533" cy="510" r="8" fill="#f03037" />
    </ModelCanvas>
  );
}

const viewTools: [string, string, boolean?][] = [
  ['zoomFit', '重新调整'], ['zoomIn', '放大'], ['zoomOut', '缩小'], ['repaint', '重画'], ['shading', '渲染', true],
  ['display', '显示样式', true], ['views', '已保存方向', true], ['viewMgr', '视图管理器'], ['perspective', '透视图'],
];

export default function App() {
  return (
    <Window>
      <Global />
      <TitleBar>
        <Icon name="logo" />
        <Brand>creo<sup>•</sup></Brand>
        <Rule />
        <QuickButton aria-label="新建"><Icon name="newFile" /></QuickButton>
        <QuickButton aria-label="打开"><Icon name="open" /></QuickButton>
        <QuickButton aria-label="保存"><Icon name="save" /></QuickButton>
        <QuickButton aria-label="撤消"><Icon name="undo" /></QuickButton>
        <QuickMenu aria-label="撤消列表"><Caret /></QuickMenu>
        <QuickButton aria-label="重做" disabled><Icon name="redo" /></QuickButton>
        <QuickMenu aria-label="重做列表" disabled><Caret $off /></QuickMenu>
        <QuickButton aria-label="重新生成"><Icon name="regenSmall" /></QuickButton>
        <QuickButton aria-label="窗口"><Icon name="windows" /></QuickButton>
        <QuickMenu aria-label="窗口列表"><Caret /></QuickMenu>
        <QuickButton aria-label="关闭"><Icon name="closeWin" /></QuickButton>
        <Rule />
        <MoreMenu aria-label="自定义"><Caret /></MoreMenu>
        <Title>SHAMPOO_BOTTLE (活动的) - Creo Parametric 6.0</Title>
      </TitleBar>
      <TabBar>
        <Tab $kind="file">文件</Tab>
        <Tab $kind="active">模型</Tab>
        {['分析', '实时仿真', '注释', '工具', '视图', '柔性建模', '应用程序'].map((t) => <Tab key={t}>{t}</Tab>)}
      </TabBar>
      <Ribbon>
        <OperateGroup name="操作">
          <Big icon="regen" label="重新生成" h={34} menu />
          <Commands items={[['copy', '复制'], ['paste', '粘贴', 'vx'], ['remove', '删除', 'v']]} />
        </OperateGroup>
        <DataGroup name="获取数据">
          <Commands items={[['udf', '用户定义特征'], ['copyGeom', '复制几何'], ['shrink', '收缩包络']]} />
        </DataGroup>
        <DatumGroup name="基准">
          <Big icon="plane" label="平面" h={22} />
          <Commands items={[['axis', '轴'], ['points', '点', 'v'], ['csys', '坐标系']]} />
          <Big icon="sketch" label="草绘" w={28} h={26} />
        </DatumGroup>
        <ShapeGroup name="形状">
          <Big icon="extrudeBig" label="拉伸" />
          <Commands items={[['revolve', '旋转'], ['sweep', '扫描', 'v'], ['sweepBlend', '扫描混合']]} />
        </ShapeGroup>
        <EngineerGroup name="工程">
          <Commands items={[['hole', '孔', 'x'], ['round', '倒圆角', 'v'], ['chamfer', '倒角', 'v']]} />
          <Commands items={[['draft', '拔模', 'v'], ['shell', '壳', 'x'], ['rib', '筋', 'vx']]} />
        </EngineerGroup>
        <RibbonGroup name="编辑">
          <Big icon="pattern" label="阵列" menu />
          <Commands items={[['mirror', '镜像'], ['trim', '修剪'], ['merge', '合并', 'x']]} />
          <Commands items={[['extend', '延伸', 'x'], ['offset', '偏移'], ['intersect', '相交']]} />
          <Commands items={[['project', '投影'], ['thicken', '加厚'], ['solidify', '实体化', 'x']]} />
        </RibbonGroup>
      </Ribbon>
      <Main>
        <Side>
          <SideTabs>
            <SideTab $active><Icon name="treeTab" />模型树</SideTab>
            <SideTab><Icon name="folders" w={18} />文件夹浏览器</SideTab>
            <SideTab><Icon name="favorites" />收藏夹</SideTab>
          </SideTabs>
          <SideHeader>
            <SideTitle>模型树</SideTitle>
            <ToolPair aria-label="工具"><Icon name="tools" w={18} h={20} /><Caret /></ToolPair>
            <ToolPair aria-label="设置"><Icon name="settings" w={18} h={20} /><Caret /></ToolPair>
            <TreeButton aria-label="显示树"><Icon name="hideTree" w={20} /></TreeButton>
          </SideHeader>
          <SearchRow>
            <Icon name="filter" />
            <SearchBox>
              <input aria-label="搜索模型树" />
              <FlatButton type="button" aria-label="清除"><Icon name="cross" w={12} /></FlatButton>
            </SearchBox>
            <SearchMenu type="button" aria-label="搜索选项"><Caret /></SearchMenu>
            <FlatButton type="button" aria-label="添加"><Icon name="plus" w={12} /></FlatButton>
          </SearchRow>
          <TreeArea>
            <Tree>
              {nodes.map(([icon, name, o = '']) => (
                <Node key={name} $off={o.includes('x')}>
                  <Expander $shown={o.includes('>')} aria-label={`展开 ${name}`} />
                  <Icon name={icon} />
                  <NodeName $selected={o.includes('s')}>{name}</NodeName>
                </Node>
              ))}
            </Tree>
            <ScrollBar>
              <ScrollArrow $up aria-label="向上滚动"><Caret /></ScrollArrow>
              <Thumb />
              <ScrollArrow aria-label="向下滚动"><Caret /></ScrollArrow>
            </ScrollBar>
          </TreeArea>
        </Side>
        <Viewport>
          <Model />
          <ViewTools>
            {viewTools.map(([icon, label, menu]) => (
              <ViewButton key={icon} aria-label={label} $menu={menu}><Icon name={icon} /></ViewButton>
            ))}
          </ViewTools>
          <Watermark>
            <IconSvg width="58" height="61" viewBox="0 0 174 183" aria-hidden="true">
              <path fillRule="evenodd" fill="#a9b9c8" d="M8 38C8 0 60 5 95 40c30 30 40 60 28 80-12 10-30 5-50-10C30 85 8 60 8 38zM22 38c2 25 30 50 55 62 28 14 44 12 40-9C112 65 80 32 50 22 34 18 22 25 22 38z" />
              <path fillRule="evenodd" fill="#e8a0a6" d="M87 145c10 15 20 20 35 15 25-10 42-40 42-70 0-15-12-20-38-12 10-14 50-30 50 8-2 40-30 85-68 90-16 0-22-12-21-31z" />
              <path d="M92 98C55 95 25 122 36 140 50 152 75 140 92 128" fill="none" stroke="#c5ccd3" strokeWidth="7" />
            </IconSvg>
            <MarkText>
              <MarkName>野火论坛</MarkName>
              <MarkUrl>www.proewildfire.cn</MarkUrl>
            </MarkText>
          </Watermark>
        </Viewport>
      </Main>
    </Window>
  );
}
